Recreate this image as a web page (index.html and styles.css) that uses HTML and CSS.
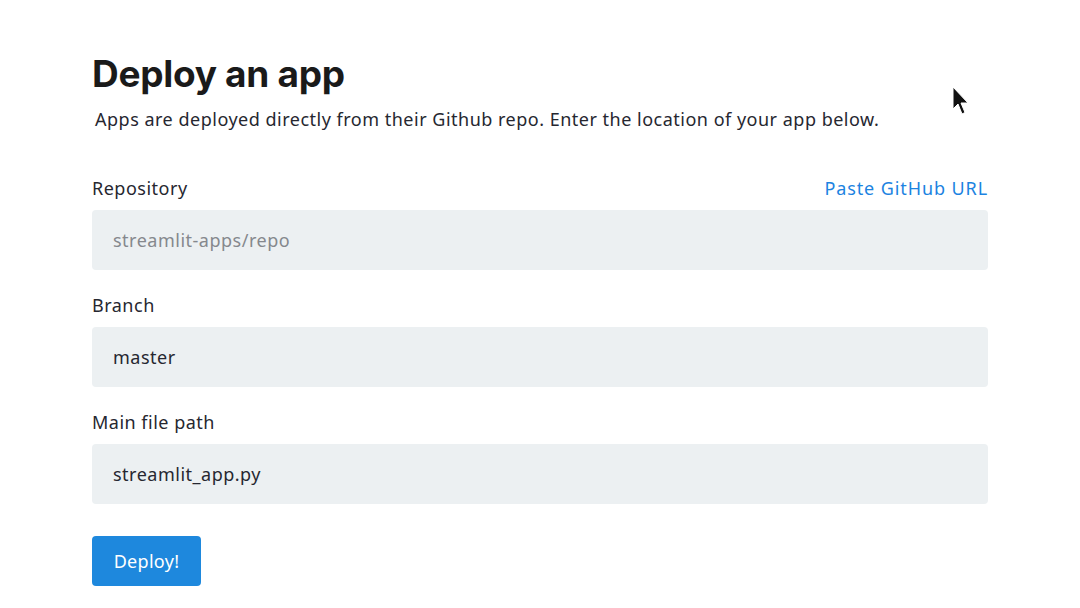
FILE: index.html
```html
<!DOCTYPE html>
<html lang="en">
<head>
<meta charset="utf-8">
<title>Deploy an app</title>
<link rel="stylesheet" href="styles.css">
</head>
<body>
<main class="page">
  <h1 class="title">Deploy an app</h1>
  <p class="subtitle">Apps are deployed directly from their Github repo. Enter the location of your app below.</p>

  <form class="form">
    <div class="field">
      <div class="field-head">
        <label class="label" for="repo">Repository</label>
        <a class="link" href="#">Paste GitHub URL</a>
      </div>
      <input class="input" id="repo" type="text" placeholder="streamlit-apps/repo">
    </div>
    <div class="field">
      <div class="field-head">
        <label class="label" for="branch">Branch</label>
      </div>
      <input class="input" id="branch" type="text" value="master">
    </div>
    <div class="field">
      <div class="field-head">
        <label class="label" for="path">Main file path</label>
      </div>
      <input class="input" id="path" type="text" value="streamlit_app.py">
    </div>
    <button class="button" type="button">Deploy!</button>
  </form>

  <svg class="cursor" width="18" height="30" viewBox="0 0 18 30" aria-hidden="true">
    <path d="M1 1 L1 23 L6 18 L10 28 L13 26.5 L9 17 L16 17 Z" fill="#111" stroke="#fff" stroke-width="1"/>
  </svg>
</main>
</body>
</html>
```
FILE: styles.css
```css
* { box-sizing: border-box; }
html, body { margin: 0; background: #ffffff; }
body {
  font-family: "Noto Sans", "Lato", sans-serif;
  color: #262730;
  letter-spacing: 0.5px;
}
.page {
  position: relative;
  width: 1080px;
  height: 608px;
  padding: 52px 92px 0 92px;
}
.title {
  margin: 0;
  font-family: "Inter", "Lato", sans-serif;
  font-weight: 700;
  font-size: 37px;
  line-height: 44px;
  letter-spacing: -0.3px;
  color: #1a1a1a;
}
.subtitle {
  margin: 10px 0 0 3px;
  font-size: 18px;
  line-height: 26px;
  color: #262730;
}
.form {
  display: flex;
  flex-direction: column;
  margin-top: 44px;
}
.field {
  display: flex;
  flex-direction: column;
  margin-bottom: 23px;
}
.field-head {
  display: flex;
  justify-content: space-between;
  align-items: baseline;
  height: 34px;
}
.label {
  font-size: 18px;
  line-height: 24px;
  color: #262730;
}
.link {
  font-size: 18px;
  line-height: 24px;
  color: #1c83e1;
  text-decoration: none;
  letter-spacing: 0.9px;
}
.input {
  width: 100%;
  height: 60px;
  border: none;
  border-radius: 4px;
  background: #ecf0f2;
  padding: 0 21px;
  font-family: inherit;
  font-size: 18px;
  letter-spacing: 0.5px;
  color: #262730;
  outline: none;
}
.input::placeholder { color: #85888d; }
.button {
  align-self: flex-start;
  margin-top: 9px;
  width: 109px;
  height: 50px;
  border: none;
  border-radius: 4px;
  background: #1e88dd;
  color: #ffffff;
  font-family: inherit;
  font-size: 18px;
  letter-spacing: 0.3px;
  cursor: pointer;
}
.cursor {
  position: absolute;
  left: 952px;
  top: 86px;
}
```
